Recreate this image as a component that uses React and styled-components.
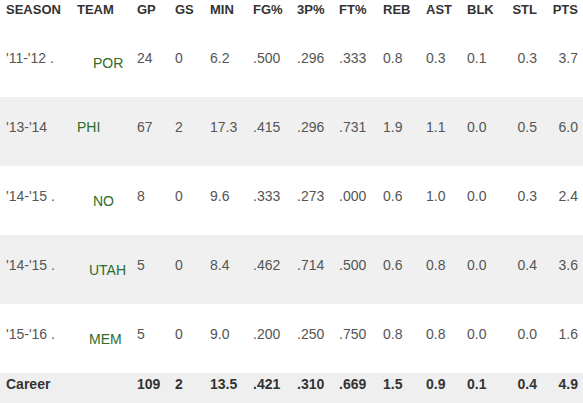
import React from 'react'
import styled, { createGlobalStyle } from 'styled-components'

const GlobalStyle = createGlobalStyle`
body {
  margin: 0;
  background: #fff;
  font-family: "Liberation Sans", Arial, sans-serif;
}
`

const columns = '71px 60px 38px 35px 43px 44px 42px 44px 43px 41px 44px 26px 41px'

const Table = styled.div`
width: 583px;
`

const Row = styled.div`
display: grid;
grid-template-columns: ${columns};
padding: 0 5px 0 6px;
box-sizing: border-box;
height: 69px;
background: ${props => props.$shade ? '#f0f0f0' : '#fff'};
`

const HeadRow = styled(Row)`
height: 28px;
padding-top: 2px;
`

const CareerRow = styled(Row)`
height: 30px;
padding-top: 3px;
background: #efefef;
`

const Head = styled.div`
font-size: 13px;
font-weight: 700;
color: #333;
white-space: nowrap;
text-align: ${props => props.$right ? 'right' : 'left'};
`

const Cell = styled.div`
font-size: 14px;
color: #555;
white-space: nowrap;
padding-top: 22px;
text-align: ${props => props.$right ? 'right' : 'left'};
`

const Team = styled(Cell)`
color: #2f6b2a;
padding-top: ${props => props.$drop ? 27 : 22}px;
padding-left: ${props => props.$indent || 0}px;
`

const Total = styled.div`
font-size: 14px;
font-weight: 700;
color: #333;
white-space: nowrap;
text-align: ${props => props.$right ? 'right' : 'left'};
`

const headers = ['SEASON', 'TEAM', 'GP', 'GS', 'MIN', 'FG%', '3P%', 'FT%', 'REB', 'AST', 'BLK', 'STL', 'PTS']

const seasons = [
  { season: "'11-'12 .", team: 'POR', indent: 16, drop: true, stats: ['24', '0', '6.2', '.500', '.296', '.333', '0.8', '0.3', '0.1', '0.3', '3.7'] },
  { season: "'13-'14", team: 'PHI', indent: 0, drop: false, stats: ['67', '2', '17.3', '.415', '.296', '.731', '1.9', '1.1', '0.0', '0.5', '6.0'] },
  { season: "'14-'15 .", team: 'NO', indent: 16, drop: true, stats: ['8', '0', '9.6', '.333', '.273', '.000', '0.6', '1.0', '0.0', '0.3', '2.4'] },
  { season: "'14-'15 .", team: 'UTAH', indent: 12, drop: true, stats: ['5', '0', '8.4', '.462', '.714', '.500', '0.6', '0.8', '0.0', '0.4', '3.6'] },
  { season: "'15-'16 .", team: 'MEM', indent: 12, drop: true, stats: ['5', '0', '9.0', '.200', '.250', '.750', '0.8', '0.8', '0.0', '0.0', '1.6'] },
]

const career = ['109', '2', '13.5', '.421', '.310', '.669', '1.5', '0.9', '0.1', '0.4', '4.9']

// last two stat columns (STL, PTS) sit flush right
const isRight = i => i >= 9

const App = () => {
  return (
    <Table>
      <GlobalStyle />
      <HeadRow>
        {headers.map((h, i) => (
          <Head key={h} $right={i >= 11}>{h}</Head>
        ))}
      </HeadRow>
      {seasons.map((s, r) => (
        <Row key={r} $shade={r % 2 === 1}>
          <Cell>{s.season}</Cell>
          <Team $drop={s.drop} $indent={s.indent}>{s.team}</Team>
          {s.stats.map((v, i) => (
            <Cell key={i} $right={isRight(i)}>{v}</Cell>
          ))}
        </Row>
      ))}
      <CareerRow>
        <Total>Career</Total>
        <Total />
        {career.map((v, i) => (
          <Total key={i} $right={isRight(i)}>{v}</Total>
        ))}
      </CareerRow>
    </Table>
  )
}

export default App
